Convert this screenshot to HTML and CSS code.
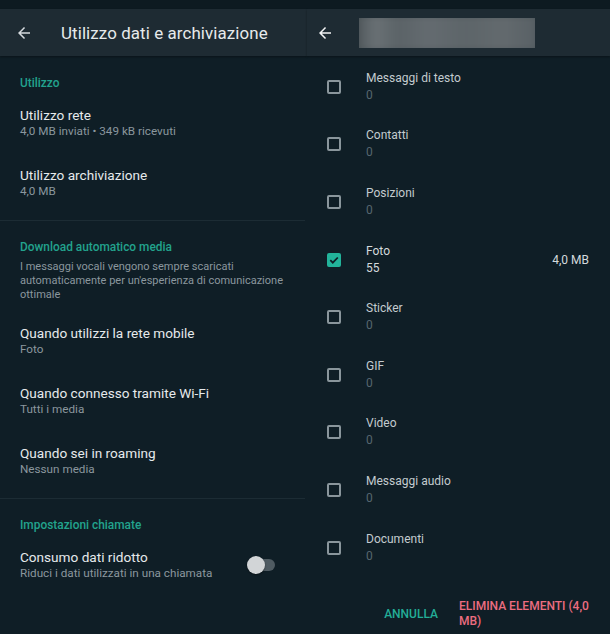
FILE: index.html
```html
<!DOCTYPE html>
<html lang="it">
<head>
<meta charset="utf-8">
<link rel="stylesheet" href="styles.css">
</head>
<body>
<div class="screen">
  <section class="panel left">
    <div class="status"></div>
    <header class="appbar">
      <svg class="back" viewBox="0 0 24 24" width="18" height="18"><path d="M20 11H7.83l5.59-5.59L12 4l-8 8 8 8 1.41-1.41L7.83 13H20v-2z" fill="#d5dade"/></svg>
      <h1 class="title">Utilizzo dati e archiviazione</h1>
    </header>
    <div class="content">
      <div class="section first">
        <div class="label">Utilizzo</div>
        <div class="item"><div class="item-title">Utilizzo rete</div><div class="item-sub">4,0 MB inviati • 349 kB ricevuti</div></div>
        <div class="item"><div class="item-title">Utilizzo archiviazione</div><div class="item-sub">4,0 MB</div></div>
      </div>
      <div class="divider"></div>
      <div class="section">
        <div class="label">Download automatico media</div>
        <p class="desc">I messaggi vocali vengono sempre scaricati automaticamente per un'esperienza di comunicazione ottimale</p>
        <div class="item"><div class="item-title">Quando utilizzi la rete mobile</div><div class="item-sub">Foto</div></div>
        <div class="item"><div class="item-title">Quando connesso tramite Wi-Fi</div><div class="item-sub">Tutti i media</div></div>
        <div class="item"><div class="item-title">Quando sei in roaming</div><div class="item-sub">Nessun media</div></div>
      </div>
      <div class="divider"></div>
      <div class="section">
        <div class="label">Impostazioni chiamate</div>
        <div class="item toggle-item">
          <div><div class="item-title">Consumo dati ridotto</div><div class="item-sub">Riduci i dati utilizzati in una chiamata</div></div>
          <div class="switch"><span class="track"></span><span class="knob"></span></div>
        </div>
      </div>
    </div>
  </section>
  <section class="panel right">
    <div class="status"></div>
    <header class="appbar">
      <svg class="back back-r" viewBox="0 0 24 24" width="18" height="18"><path d="M20 11H7.83l5.59-5.59L12 4l-8 8 8 8 1.41-1.41L7.83 13H20v-2z" fill="#f2f4f5"/></svg>
      <div class="blurbox"><div class="blurinner"></div></div>
    </header>
    <div class="rows">
      <div class="row"><span class="cb"></span><div class="row-text"><div class="row-title">Messaggi di testo</div><div class="row-sub">0</div></div></div>
      <div class="row"><span class="cb"></span><div class="row-text"><div class="row-title">Contatti</div><div class="row-sub">0</div></div></div>
      <div class="row"><span class="cb"></span><div class="row-text"><div class="row-title">Posizioni</div><div class="row-sub">0</div></div></div>
      <div class="row checked"><span class="cb on"><svg viewBox="0 0 14 14" width="14" height="14"><path d="M3.3 7.2l2.5 2.5 5-5.2" fill="none" stroke="#0f1e26" stroke-width="1.8"/></svg></span><div class="row-text"><div class="row-title">Foto</div><div class="row-sub">55</div></div><div class="row-size">4,0 MB</div></div>
      <div class="row"><span class="cb"></span><div class="row-text"><div class="row-title">Sticker</div><div class="row-sub">0</div></div></div>
      <div class="row"><span class="cb"></span><div class="row-text"><div class="row-title">GIF</div><div class="row-sub">0</div></div></div>
      <div class="row"><span class="cb"></span><div class="row-text"><div class="row-title">Video</div><div class="row-sub">0</div></div></div>
      <div class="row"><span class="cb"></span><div class="row-text"><div class="row-title">Messaggi audio</div><div class="row-sub">0</div></div></div>
      <div class="row"><span class="cb"></span><div class="row-text"><div class="row-title">Documenti</div><div class="row-sub">0</div></div></div>
    </div>
    <div class="actions">
      <button class="btn cancel">ANNULLA</button>
      <button class="btn delete">ELIMINA ELEMENTI (4,0 MB)</button>
    </div>
  </section>
</div>
</body>
</html>
```
FILE: styles.css
```css
* { box-sizing: border-box; }
html, body { margin: 0; padding: 0; }
body {
  width: 610px;
  height: 634px;
  overflow: hidden;
  background: #0f1e26;
  font-family: Roboto, "Noto Sans", sans-serif;
  color: #e6eaec;
}
.screen { display: flex; height: 634px; }
.panel { display: flex; flex-direction: column; height: 634px; }
.left { width: 307px; }
.right { flex: 1; }
.status { height: 9px; background: #0d1a21; }
.appbar {
  height: 47px;
  background: #1e2b33;
  display: flex;
  align-items: center;
  box-shadow: 0 1px 2px rgba(0,0,0,0.35);
  position: relative;
  z-index: 1;
}
.back { margin-left: 15px; flex: none; }
.back-r { margin-left: 9px; }
.title {
  margin: 0 0 0 28px;
  font-size: 16.9px;
  font-weight: 400;
  color: #e6eaec;
  letter-spacing: 0.1px;
}
.blurbox {
  margin-left: 25px;
  width: 176px;
  height: 30px;
  overflow: hidden;
  position: relative;
}
.blurinner {
  position: absolute;
  inset: -6px;
  background: linear-gradient(90deg, #4a5256 0%, #6a7175 12%, #5b6367 24%, #646b70 40%, #5d6569 60%, #636a6e 80%, #575f64 100%);
  filter: blur(4px);
}
.section { padding-top: 19px; padding-bottom: 8px; }
.section.first { padding-top: 20px; }
.label {
  padding: 0 20px;
  font-size: 11.9px;
  line-height: 14px;
  font-weight: 500;
  color: #22a38d;
  margin-bottom: 2px;
}
.desc {
  margin: 6px 0 8px;
  padding: 0 20px;
  font-size: 11px;
  line-height: 14px;
  color: #8b979e;
}
.item { padding: 14px 20px 13px; height: 60px; }
.item-title { font-size: 13.6px; line-height: 18px; color: #e6eaec; }
.item-sub { font-size: 11.7px; line-height: 15px; color: #8b979e; }
.divider { height: 1px; background: #1c2c34; margin: 0 2px 0 0; }
.toggle-item { display: flex; justify-content: space-between; align-items: center; padding-right: 32px; }
.switch { position: relative; width: 28px; height: 18px; }
.track {
  position: absolute; left: 6px; top: 3px; width: 22px; height: 12px;
  border-radius: 6px; background: #4f5b62;
}
.knob {
  position: absolute; left: 0; top: 0; width: 18px; height: 18px;
  border-radius: 50%; background: #d2d5d7;
  box-shadow: 0 1px 2px rgba(0,0,0,0.4);
}
.rows { display: flex; flex-direction: column; padding-top: 2px; }
.row {
  height: 57.6px;
  display: flex;
  align-items: center;
  padding: 0 21px 0 20px;
}
.cb {
  width: 14px; height: 14px; flex: none;
  border: 2px solid #8a969c;
  border-radius: 2px;
  display: flex; align-items: center; justify-content: center;
}
.cb.on { background: #22b39a; border-color: #22b39a; }
.cb.on svg { flex: none; }
.row-text { margin-left: 25px; flex: 1; }
.row-title { font-size: 12px; line-height: 17px; color: #c3cbcf; }
.row-sub { font-size: 12px; line-height: 17px; color: #56666e; }
.checked .row-sub { color: #d4dadd; }
.checked .row-title { color: #d4dadd; }
.row-size { font-size: 12px; color: #d4dadd; }
.actions {
  margin-top: auto;
  height: 44px;
  display: flex;
  align-items: center;
  justify-content: flex-end;
  padding: 4px 20px 0 0;
  gap: 21px;
}
.btn {
  background: none; border: 0; padding: 0;
  font-family: Roboto, "Noto Sans", sans-serif;
  font-size: 12px;
  font-weight: 500;
  line-height: 15px;
  text-align: left;
}
.cancel { color: #23ad97; }
.delete { color: #ec6d80; width: 131px; }
```
